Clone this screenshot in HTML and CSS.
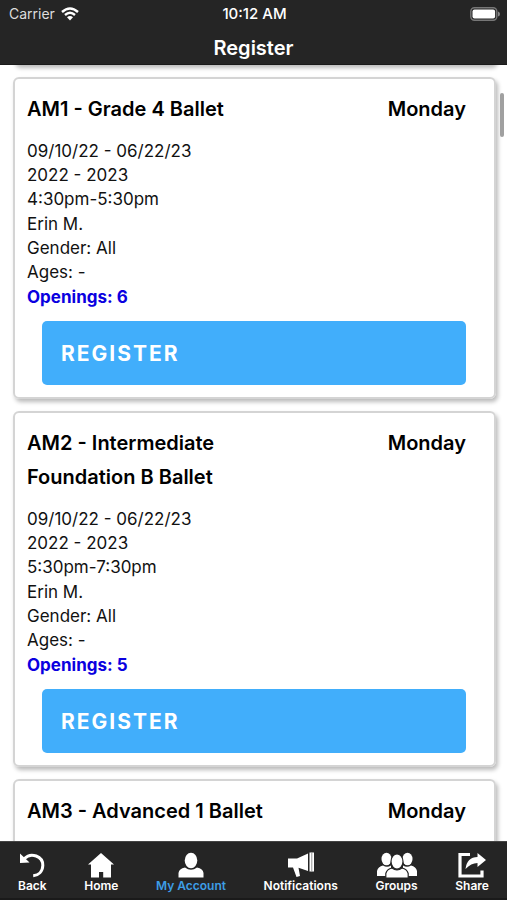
FILE: index.html
```html
<!DOCTYPE html>
<html lang="en">
<head>
<meta charset="utf-8">
<meta name="viewport" content="width=device-width, initial-scale=1">
<title>Register</title>
<link rel="stylesheet" href="styles.css">
</head>
<body>
<header class="top">
  <div class="status">
    <span class="carrier">Carrier
      <svg class="wifi" viewBox="0 0 18 14" aria-hidden="true"><path d="M1 5Q9-2 17 5M4 8Q9 3.6 14 8" fill="none" stroke="#fff" stroke-width="2.4"/><path d="M6 10.2Q9 8 12 10.2L9 13.5Z" fill="#fff"/></svg>
    </span>
    <time>10:12 AM</time>
    <svg class="battery" viewBox="0 0 30 14" aria-hidden="true"><rect x=".8" y=".8" width="26" height="12.4" rx="3.6" fill="none" stroke="#777" stroke-width="1.4"/><rect x="2.5" y="2.5" width="22.6" height="9" rx="2" fill="#fff"/><path d="M28 4.5Q30 5 30 7Q30 9 28 9.5Z" fill="#888"/></svg>
  </div>
  <h1>Register</h1>
</header>

<main class="classes">
  <article class="card">
    <div class="heading"><h2>AM1 - Grade 4 Ballet</h2><span class="day">Monday</span></div>
    <div class="details">
      <div><p>09/10/22 - 06/22/23</p><p>2022 - 2023</p><p>4:30pm-5:30pm</p></div>
      <div><p>Erin M.</p><p>Gender: All</p><p>Ages: -</p></div>
      <p class="openings">Openings: 6</p>
    </div>
    <button type="button" class="register">REGISTER</button>
  </article>
  <article class="card">
    <div class="heading"><h2>AM2 - Intermediate Foundation B Ballet</h2><span class="day">Monday</span></div>
    <div class="details">
      <div><p>09/10/22 - 06/22/23</p><p>2022 - 2023</p><p>5:30pm-7:30pm</p></div>
      <div><p>Erin M.</p><p>Gender: All</p><p>Ages: -</p></div>
      <p class="openings">Openings: 5</p>
    </div>
    <button type="button" class="register">REGISTER</button>
  </article>
  <article class="card">
    <div class="heading"><h2>AM3 - Advanced 1 Ballet</h2><span class="day">Monday</span></div>
    <div class="details"></div>
  </article>
  <div class="thumb"></div>
</main>

<nav class="tabs">
  <a href="#back"><svg viewBox="0 0 26 26" aria-hidden="true"><path d="M5.500 6.500C12-.2 24 4.200 23.800 13.500C23.600 19.500 19.500 23.300 14.200 23.700" fill="none" stroke="#fff" stroke-width="3"/><path d="M1 1.500L1 11L10.500 10.500Z" fill="#fff"/></svg>Back</a>
  <a href="#home"><svg viewBox="0 0 26 26" aria-hidden="true"><path d="M13 1L26 12.500H23V25.500H15.200V20H11V25.500H3V12.500H0Z" fill="#fff"/></svg>Home</a>
  <a href="#account" class="active" aria-current="page"><svg viewBox="0 0 26 26" aria-hidden="true"><ellipse cx="13" cy="8.500" rx="6.300" ry="7.700" fill="#fff"/><path d="M.5 25.500V21Q1 16.500 7 15.500Q13 20 19 15.500Q25 16.500 25.500 21V25.500Z" fill="#fff"/></svg>My Account</a>
  <a href="#notifications"><svg viewBox="0 0 26 26" aria-hidden="true"><path d="M0 6.500H9L20 1.500V19L10.500 15.800L12 24L8.500 25L5 15.500H0Z" fill="#fff"/><rect x="21.500" y=".5" width="4.500" height="19" fill="#fff"/><path d="M23.800 1V19" stroke="#777" stroke-width=".8"/></svg>Notifications</a>
  <a href="#groups"><svg class="wide" viewBox="0 0 40 26" aria-hidden="true"><g fill="#fff"><ellipse cx="9.500" cy="7" rx="5" ry="6.300"/><ellipse cx="30.500" cy="7" rx="5" ry="6.300"/><path d="M0 24V19Q1 14.500 6 13.500Q10 16 14 13.500V24ZM40 24V19Q39 14.500 34 13.500Q30 16 26 13.500V24Z"/></g><g fill="#fff" stroke="#252525" stroke-width="1.200"><path d="M8.800 26V21.500Q10 17 15 16Q20 20 25 16Q30 17 31.200 21.500V26Z"/><ellipse cx="20" cy="9.500" rx="6" ry="7.500"/></g></svg>Groups</a>
  <a href="#share"><svg class="share" viewBox="0 0 28 26" aria-hidden="true"><path d="M12 2.500H2V24H24V18.500" fill="none" stroke="#fff" stroke-width="3.200"/><path d="M7.500 17Q9 5 19.500 5V1L28 8L19.500 15V11Q13 11 7.500 17Z" fill="#fff"/></svg>Share</a>
</nav>
</body>
</html>
```
FILE: styles.css
```css
* { box-sizing: border-box; }

body {
  margin: 0;
  height: 100vh;
  display: flex;
  flex-direction: column;
  overflow: hidden;
  background: #fff;
  color: #111;
  font-family: Inter, "Liberation Sans", sans-serif;
}

h1, h2, p { margin: 0; }

.top {
  flex: none;
  background: #252525;
  border-bottom: 1px solid #1a1a1a;
  color: #fff;
}

.status {
  display: grid;
  grid-template-columns: 1fr auto 1fr;
  align-items: center;
  height: 27px;
  padding: 0 7px 0 9px;
  font-size: 15px;
  font-weight: 500;
}

.carrier {
  display: flex;
  align-items: center;
  gap: 6px;
  color: #ddd;
  font-size: 14px;
  font-weight: 400;
}

.wifi { width: 18px; height: 14px; }
.battery { width: 30px; height: 14px; justify-self: end; }

h1 {
  padding: 8px 0 3px;
  font-size: 20px;
  font-weight: 600;
  line-height: 26px;
  text-align: center;
}

.classes {
  position: relative;
  flex: 1;
  min-height: 0;
  overflow: hidden;
  display: flex;
  flex-direction: column;
  gap: 12px;
  padding: 0 11px 0 13px;
}

.classes::before,
.card {
  flex: none;
  border: 2px solid #d4d4d4;
  border-radius: 6px;
  box-shadow: 2px 3px 4px #bbb;
}

.classes::before {
  content: "";
  height: 8px;
  margin-top: -12px;
}

.card { padding: 13px 28px 12px 12px; }

.heading {
  display: flex;
  justify-content: space-between;
  gap: 16px;
  color: #000;
  font-size: 20px;
  font-weight: 600;
  line-height: 34px;
}

h2 {
  max-width: 60%;
  font-size: inherit;
  font-weight: inherit;
}

.details {
  display: grid;
  gap: 1px;
  margin: 13px 0 12px;
  font-size: 17px;
  line-height: 24px;
}

.openings {
  color: #0a00e0;
  font-weight: 700;
}

.register {
  display: block;
  width: calc(100% - 15px);
  height: 64px;
  margin: 0 0 0 15px;
  padding: 0 19px;
  border: 0;
  border-radius: 5px;
  background: #41aefb;
  color: #fff;
  font: 700 21px Inter, "Liberation Sans", sans-serif;
  letter-spacing: 2px;
  text-align: left;
}

.thumb {
  position: absolute;
  top: 28px;
  right: 3px;
  width: 4px;
  height: 44px;
  border-radius: 2px;
  background: #a0a0a0;
}

.tabs {
  flex: none;
  display: flex;
  justify-content: space-between;
  height: 59px;
  padding: 10px 18px 0;
  background: #252525;
  border-top: 1px solid #444;
  border-bottom: 2px solid #1a1a1a;
}

.tabs a {
  display: flex;
  flex-direction: column;
  align-items: center;
  color: #fff;
  font-size: 12px;
  font-weight: 600;
  line-height: 16px;
  text-decoration: none;
}

.tabs .active { color: #3d9ee6; }
.tabs svg { width: 26px; height: 26px; }
.tabs .wide { width: 40px; }
.tabs .share { width: 28px; }
```
